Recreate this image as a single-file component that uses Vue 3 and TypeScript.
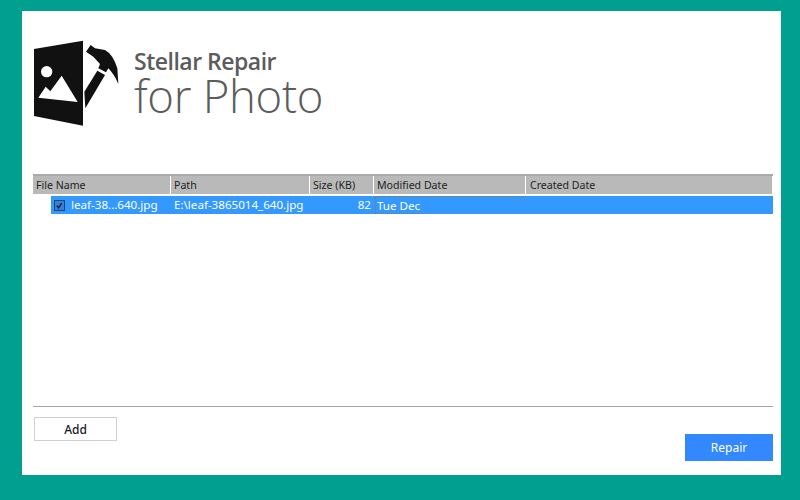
<template>
  <div class="window">
    <div class="brand">
      <svg class="logo" viewBox="0 0 315 300" width="105" height="100" xmlns="http://www.w3.org/2000/svg">
        <path d="M27 42 L174 17 V272 L27 243 Z" fill="#111" />
        <circle cx="65" cy="110" r="17" fill="#fff" />
        <path d="M40 188 L62 155 L76 169 L110 122 L158 201 Z" fill="#fff" />
        <path d="M183 50 L197 30 L210 40 L240 45 Q264 58 277 100 L280 147 Q268 118 250 100 L243 112 L220 100 L225 87 L205 65 Z" fill="#111" />
        <path d="M217 107 L240 120 L181 220 L178 170 Z" fill="#111" />
      </svg>
      <div class="brand-text">
        <span class="brand-top">Stellar Repair</span>
        <span class="brand-bottom">for Photo</span>
      </div>
    </div>

    <div class="table">
      <div class="head">
        <div v-for="col in columns" :key="col.label" class="head-cell" :style="{ width: col.width + 'px' }">
          {{ col.label }}
        </div>
      </div>
      <div class="row">
        <div class="cell cell-name">
          <span class="check">
            <svg viewBox="0 0 10 10" width="10" height="10" xmlns="http://www.w3.org/2000/svg">
              <path d="M2 4.6 L4 7 L7.4 1.8" fill="none" stroke="#0e1c40" stroke-width="1.6" />
            </svg>
          </span>
          <span>leaf-38...640.jpg</span>
        </div>
        <div class="cell cell-path">E:\leaf-3865014_640.jpg</div>
        <div class="cell cell-size">82</div>
        <div class="cell cell-date"><span>Tue Dec</span></div>
      </div>
    </div>

    <div class="footer">
      <button class="btn-add">Add</button>
      <button class="btn-repair">Repair</button>
    </div>
  </div>
</template>

<script setup lang="ts">
const columns = [
  { label: 'File Name', width: 137 },
  { label: 'Path', width: 138 },
  { label: 'Size (KB)', width: 63 },
  { label: 'Modified Date', width: 151 },
  { label: 'Created Date', width: 246 },
]
</script>

<style>
html,
body {
  margin: 0;
  background: #009f8f;
}
</style>

<style scoped>
.window {
  box-sizing: border-box;
  width: 759px;
  height: 464px;
  margin: 11px 0 0 22px;
  padding: 0 8px 0 11px;
  background: #fff;
  display: flex;
  flex-direction: column;
  font-family: "Noto Sans", sans-serif;
  font-size: 11.6px;
}

.brand {
  height: 163px;
  box-sizing: border-box;
  padding: 24px 0 0 0;
  margin-left: -8px;
  display: flex;
  align-items: flex-start;
}

.logo {
  flex-shrink: 0;
  display: block;
}

.brand-text {
  display: flex;
  flex-direction: column;
  margin-left: 4px;
  margin-top: 13px;
  color: #5c5c5c;
  font-family: "Open Sans", sans-serif;
}

.brand-top {
  font-size: 23px;
  font-weight: 600;
  line-height: 27px;
  letter-spacing: -0.5px;
}

.brand-bottom {
  font-size: 45.5px;
  font-weight: 300;
  line-height: 40px;
  letter-spacing: -0.3px;
}

.table {
  flex: 1;
  border-top: 2px solid #a9a9a9;
}

.head {
  display: flex;
  gap: 1px;
  height: 18px;
  padding-bottom: 2px;
}

.head-cell {
  box-sizing: border-box;
  background: #b9b9b9;
  color: #222;
  padding-left: 3px;
  font-size: 10.6px;
  line-height: 18px;
  white-space: nowrap;
}

.head-cell:last-child {
  padding-left: 4px;
}

.row {
  display: flex;
  height: 18px;
  margin-left: 18px;
  background: #3399ff;
  color: #fff;
  line-height: 18px;
}

.cell {
  box-sizing: border-box;
  white-space: nowrap;
}

.cell-name {
  width: 120px;
  display: flex;
  align-items: center;
  gap: 6px;
  padding-left: 3px;
}

.check {
  box-sizing: border-box;
  width: 11px;
  height: 11px;
  background: #3a80cf;
  border: 1px solid #1b467f;
  display: flex;
}

.cell-path {
  width: 139px;
  padding-left: 3px;
}

.cell-size {
  width: 63px;
  text-align: right;
  padding-right: 2px;
}

.cell-date {
  width: 151px;
  margin-left: 2px;
  height: 18px;
  border-top: 1px dotted #8a7a50;
  line-height: 17px;
}

.cell-date span {
  display: inline-block;
  height: 17px;
  width: 47px;
  padding-left: 1px;
  border-left: 1px dotted #8a7a50;
  border-bottom: 1px dotted #8a7a50;
  box-sizing: border-box;
}

.footer {
  border-top: 1px solid #a5a5a5;
  height: 69px;
  box-sizing: border-box;
  display: flex;
  justify-content: space-between;
  align-items: flex-start;
  padding-left: 1px;
}

.btn-add {
  width: 83px;
  height: 24px;
  margin-top: 10px;
  background: #fff;
  border: 1px solid #d0d0d0;
  color: #1a1a2a;
  font-family: "Noto Sans", sans-serif;
  font-size: 12px;
  font-weight: 500;
  padding: 0;
}

.btn-repair {
  width: 88px;
  height: 27px;
  margin-top: 27px;
  background: #3388ff;
  border: none;
  color: #fff;
  font-family: "Noto Sans", sans-serif;
  font-size: 12px;
  padding: 0;
}
</style>
